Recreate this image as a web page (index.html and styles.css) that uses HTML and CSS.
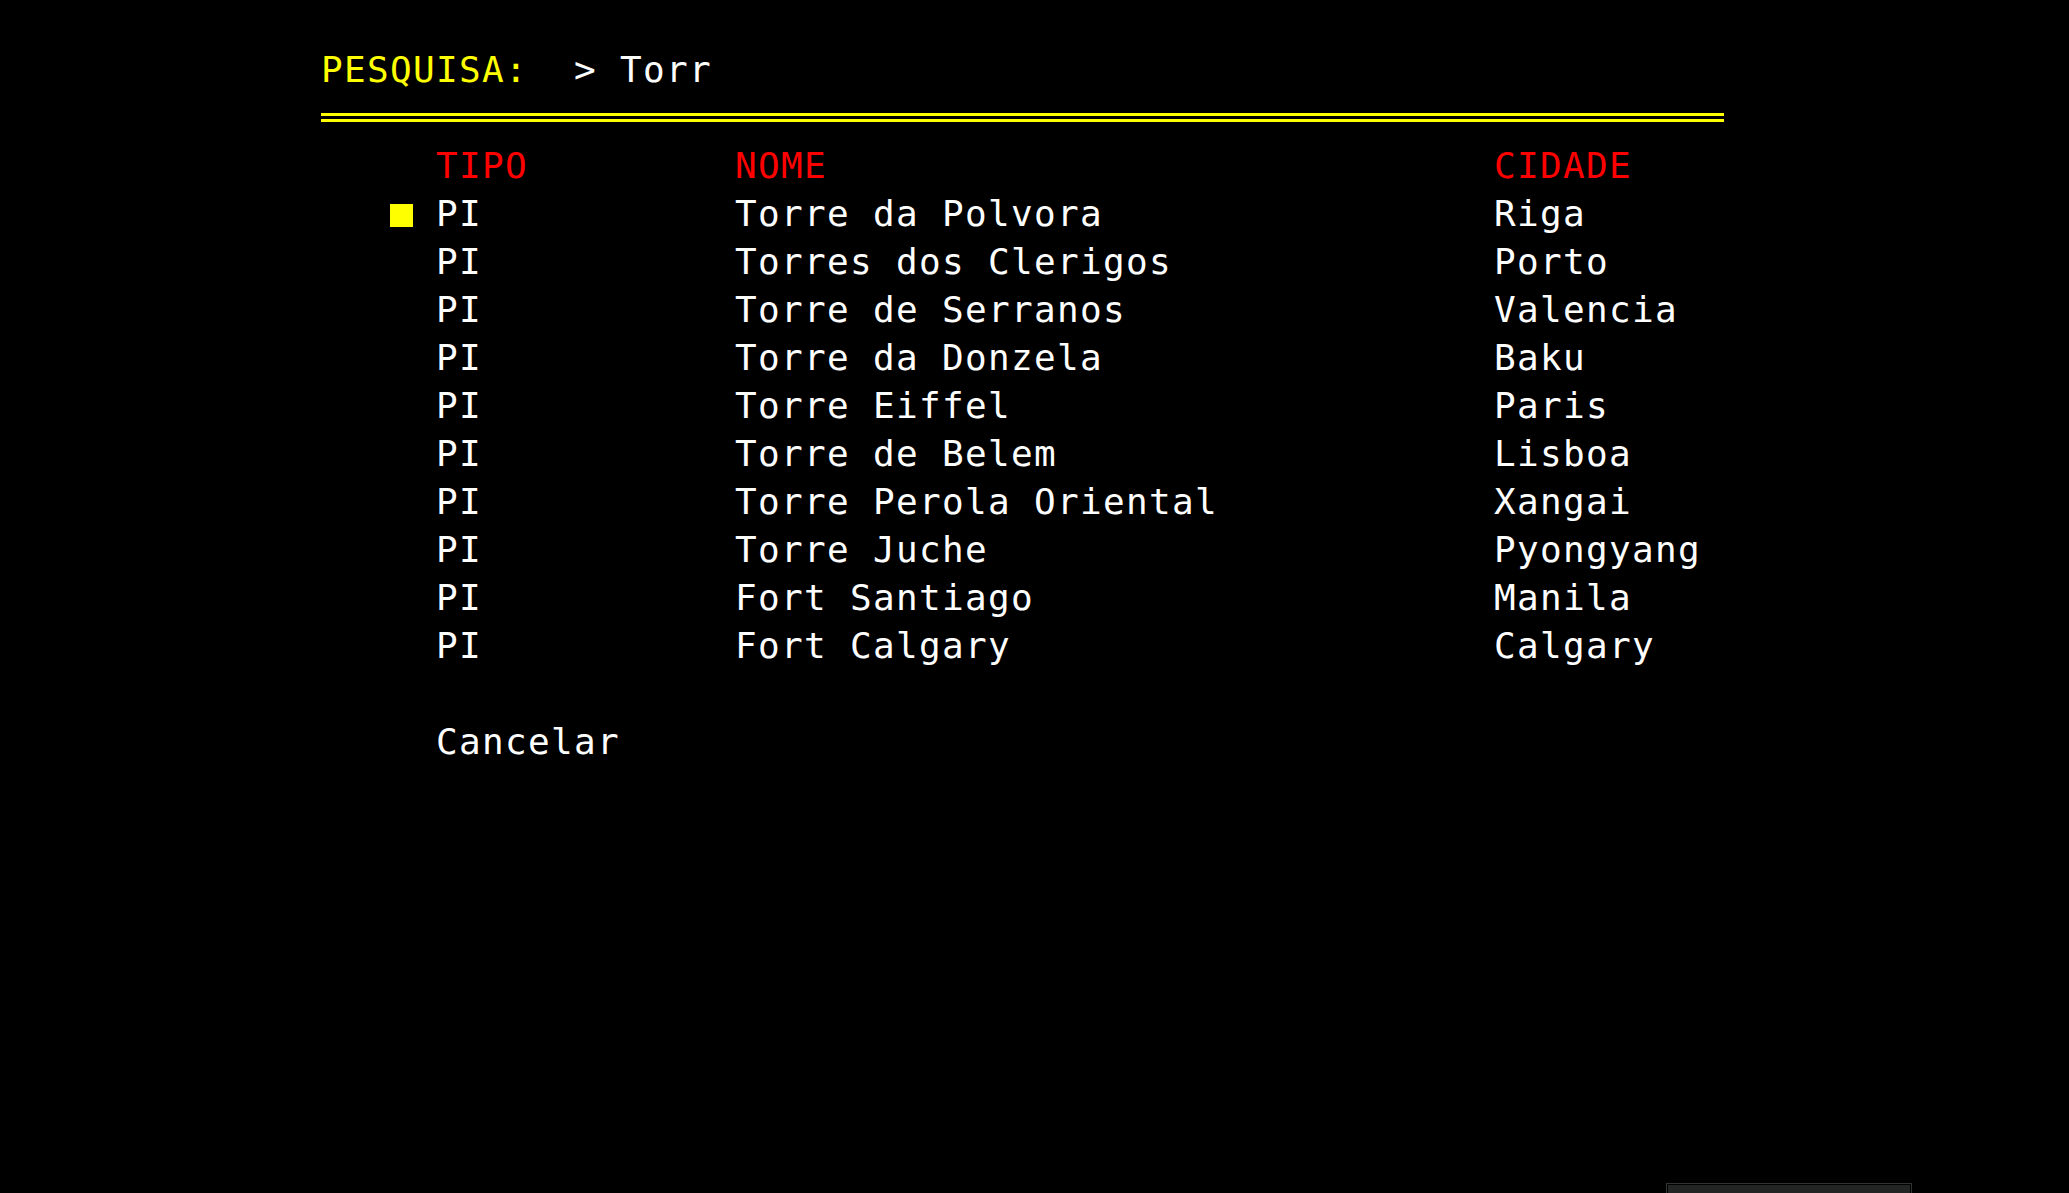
FILE: index.html
```html
<!DOCTYPE html>
<html lang="pt">
<head>
<meta charset="utf-8">
<title>Pesquisa</title>
<link rel="stylesheet" href="styles.css">
</head>
<body>
<div class="term">
  <div class="line search"><span class="label">PESQUISA:</span>  <span class="query">&gt; Torr</span></div>
  <div class="line rule-line"><div class="double-rule"></div></div>
  <div class="row header">
    <div class="cell marker"></div>
    <div class="cell">TIPO</div>
    <div class="cell">NOME</div>
    <div class="cell">CIDADE</div>
  </div>
  <div class="row selected">
    <div class="cell marker"><span class="cursor"></span></div>
    <div class="cell">PI</div>
    <div class="cell">Torre da Polvora</div>
    <div class="cell">Riga</div>
  </div>
  <div class="row">
    <div class="cell marker"></div>
    <div class="cell">PI</div>
    <div class="cell">Torres dos Clerigos</div>
    <div class="cell">Porto</div>
  </div>
  <div class="row">
    <div class="cell marker"></div>
    <div class="cell">PI</div>
    <div class="cell">Torre de Serranos</div>
    <div class="cell">Valencia</div>
  </div>
  <div class="row">
    <div class="cell marker"></div>
    <div class="cell">PI</div>
    <div class="cell">Torre da Donzela</div>
    <div class="cell">Baku</div>
  </div>
  <div class="row">
    <div class="cell marker"></div>
    <div class="cell">PI</div>
    <div class="cell">Torre Eiffel</div>
    <div class="cell">Paris</div>
  </div>
  <div class="row">
    <div class="cell marker"></div>
    <div class="cell">PI</div>
    <div class="cell">Torre de Belem</div>
    <div class="cell">Lisboa</div>
  </div>
  <div class="row">
    <div class="cell marker"></div>
    <div class="cell">PI</div>
    <div class="cell">Torre Perola Oriental</div>
    <div class="cell">Xangai</div>
  </div>
  <div class="row">
    <div class="cell marker"></div>
    <div class="cell">PI</div>
    <div class="cell">Torre Juche</div>
    <div class="cell">Pyongyang</div>
  </div>
  <div class="row">
    <div class="cell marker"></div>
    <div class="cell">PI</div>
    <div class="cell">Fort Santiago</div>
    <div class="cell">Manila</div>
  </div>
  <div class="row">
    <div class="cell marker"></div>
    <div class="cell">PI</div>
    <div class="cell">Fort Calgary</div>
    <div class="cell">Calgary</div>
  </div>
  <div class="line blank"></div>
  <div class="line cancel">Cancelar</div>
</div>
<div class="scroll-peek"></div>
</body>
</html>
```

FILE: styles.css
```css
html, body {
  margin: 0;
  padding: 0;
  background: #000;
  height: 100%;
  overflow: hidden;
}

body {
  color: #fff;
  font-family: "DejaVu Sans Mono", "Liberation Mono", monospace;
  font-size: 36px;
  letter-spacing: 1.33px;
  line-height: 48px;
  position: relative;
}

.term {
  padding-top: 46px;
  padding-left: 321px;
}

.line {
  height: 48px;
  white-space: pre;
}

.search .label {
  color: #ffff00;
}

.search .query {
  color: #fff;
}

.rule-line {
  display: flex;
  align-items: flex-start;
}

.double-rule {
  width: 1403px;
  margin-top: 19px;
  height: 3px;
  border-top: 3px solid #ffff00;
  border-bottom: 3px solid #ffff00;
}

.row {
  display: grid;
  grid-template-columns: 115px 299px 759px auto;
  height: 48px;
  white-space: pre;
}

.header {
  color: #ff0000;
}

.marker {
  display: flex;
  align-items: flex-start;
  padding-left: 69px;
}

.cursor {
  display: block;
  width: 23px;
  height: 23px;
  margin-top: 14px;
  background: #ffff00;
}

.cancel {
  padding-left: 115px;
}

.scroll-peek {
  position: absolute;
  left: 1666px;
  top: 1183px;
  width: 242px;
  height: 20px;
  border: 1px solid #333333;
  padding: 1px;
  background-clip: content-box;
  background-color: #232524;
}
```
